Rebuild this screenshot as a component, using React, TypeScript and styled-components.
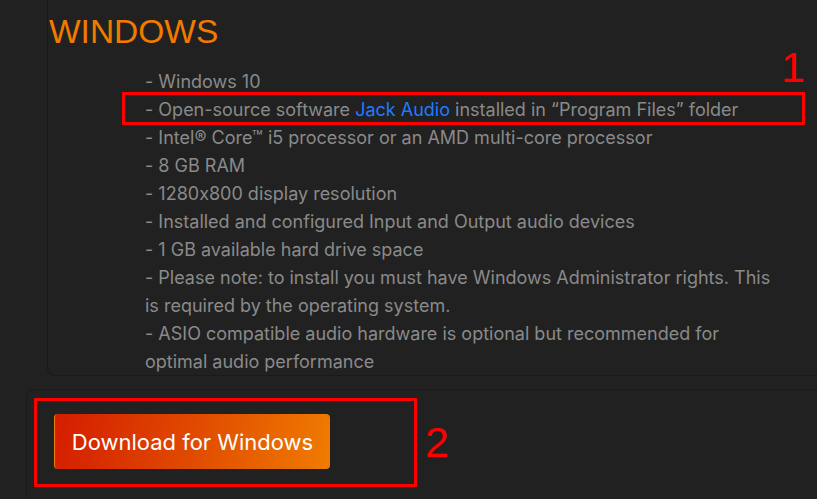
import styled, { createGlobalStyle } from 'styled-components';

const GlobalStyle = createGlobalStyle`
  html, body {
    margin: 0;
    padding: 0;
    background: #212121;
    font-family: Inter, 'Liberation Sans', Arial, sans-serif;
    font-feature-settings: 'calt' 0;
    overflow: hidden;
  }
`;

const Page = styled.div`
  position: relative;
  display: flex;
  flex-direction: column;
  gap: 13px;
  width: 817px;
  height: 499px;
  overflow: hidden;
`;

const RequirementsPanel = styled.section`
  display: flex;
  flex-direction: column;
  gap: 14px;
  margin-left: 47px;
  height: 376px;
  box-sizing: border-box;
  border-left: 1px solid #1a1a1a;
  border-bottom: 1px solid #1a1a1a;
  border-bottom-left-radius: 8px;
  padding: 9px 0 0 1px;
`;

const Title = styled.h2`
  margin: 0;
  font-family: 'Liberation Sans', Arial, sans-serif;
  font-size: 33.5px;
  font-weight: 400;
  line-height: 45px;
  color: #f27a00;
`;

const List = styled.ul`
  display: flex;
  flex-direction: column;
  list-style: none;
  margin: 0 0 0 96px;
  padding: 0;
  width: 640px;
`;

const Item = styled.li`
  font-size: 18px;
  line-height: 28px;
  color: #8a8a8a;
`;

const Link = styled.a`
  color: #1e7bff;
  text-decoration: none;
`;

const DownloadPanel = styled.section`
  display: flex;
  align-items: flex-start;
  flex: 1;
  margin-left: 26px;
  border-left: 1px solid #1a1a1a;
  border-top: 1px solid #1a1a1a;
  border-top-left-radius: 8px;
  padding: 24px 0 0 27px;
`;

const DownloadButton = styled.button`
  width: 276px;
  height: 55px;
  border: none;
  border-left: 1px solid #f08000;
  border-radius: 4px;
  background: linear-gradient(100deg, #d41d00 0%, #e04a00 50%, #f07c00 100%);
  color: #fff;
  font-family: Inter, 'Liberation Sans', Arial, sans-serif;
  font-size: 22px;
  padding: 0;
  cursor: pointer;
`;

const Highlight = styled.div`
  position: absolute;
  box-sizing: border-box;
  border: 3px solid #ff0000;
`;

const Marker = styled.span`
  position: absolute;
  color: #ff0000;
  font-family: 'Liberation Sans', Arial, sans-serif;
  font-size: 43px;
  line-height: 1;
`;

const requirements = [
  '- Intel® Core™ i5 processor or an AMD multi-core processor',
  '- 8 GB RAM',
  '- 1280x800 display resolution',
  '- Installed and configured Input and Output audio devices',
  '- 1 GB available hard drive space',
  '- Please note: to install you must have Windows Administrator rights. This is required by the operating system.',
  '- ASIO compatible audio hardware is optional but recommended for optimal audio performance',
];

export default function App() {
  return (
    <Page>
      <GlobalStyle />
      <RequirementsPanel>
        <Title>WINDOWS</Title>
        <List>
          <Item>- Windows 10</Item>
          <Item>
            - Open-source software <Link href="#">Jack Audio</Link> installed in “Program Files” folder
          </Item>
          {requirements.map((r) => (
            <Item key={r}>{r}</Item>
          ))}
        </List>
      </RequirementsPanel>
      <DownloadPanel>
        <DownloadButton>Download for Windows</DownloadButton>
      </DownloadPanel>

      <Highlight style={{ left: 122, top: 92, width: 683, height: 33 }} />
      <Marker style={{ left: 781, top: 46 }}>1</Marker>
      <Highlight style={{ left: 34, top: 398, width: 383, height: 89 }} />
      <Marker style={{ left: 425, top: 421 }}>2</Marker>
    </Page>
  );
}
